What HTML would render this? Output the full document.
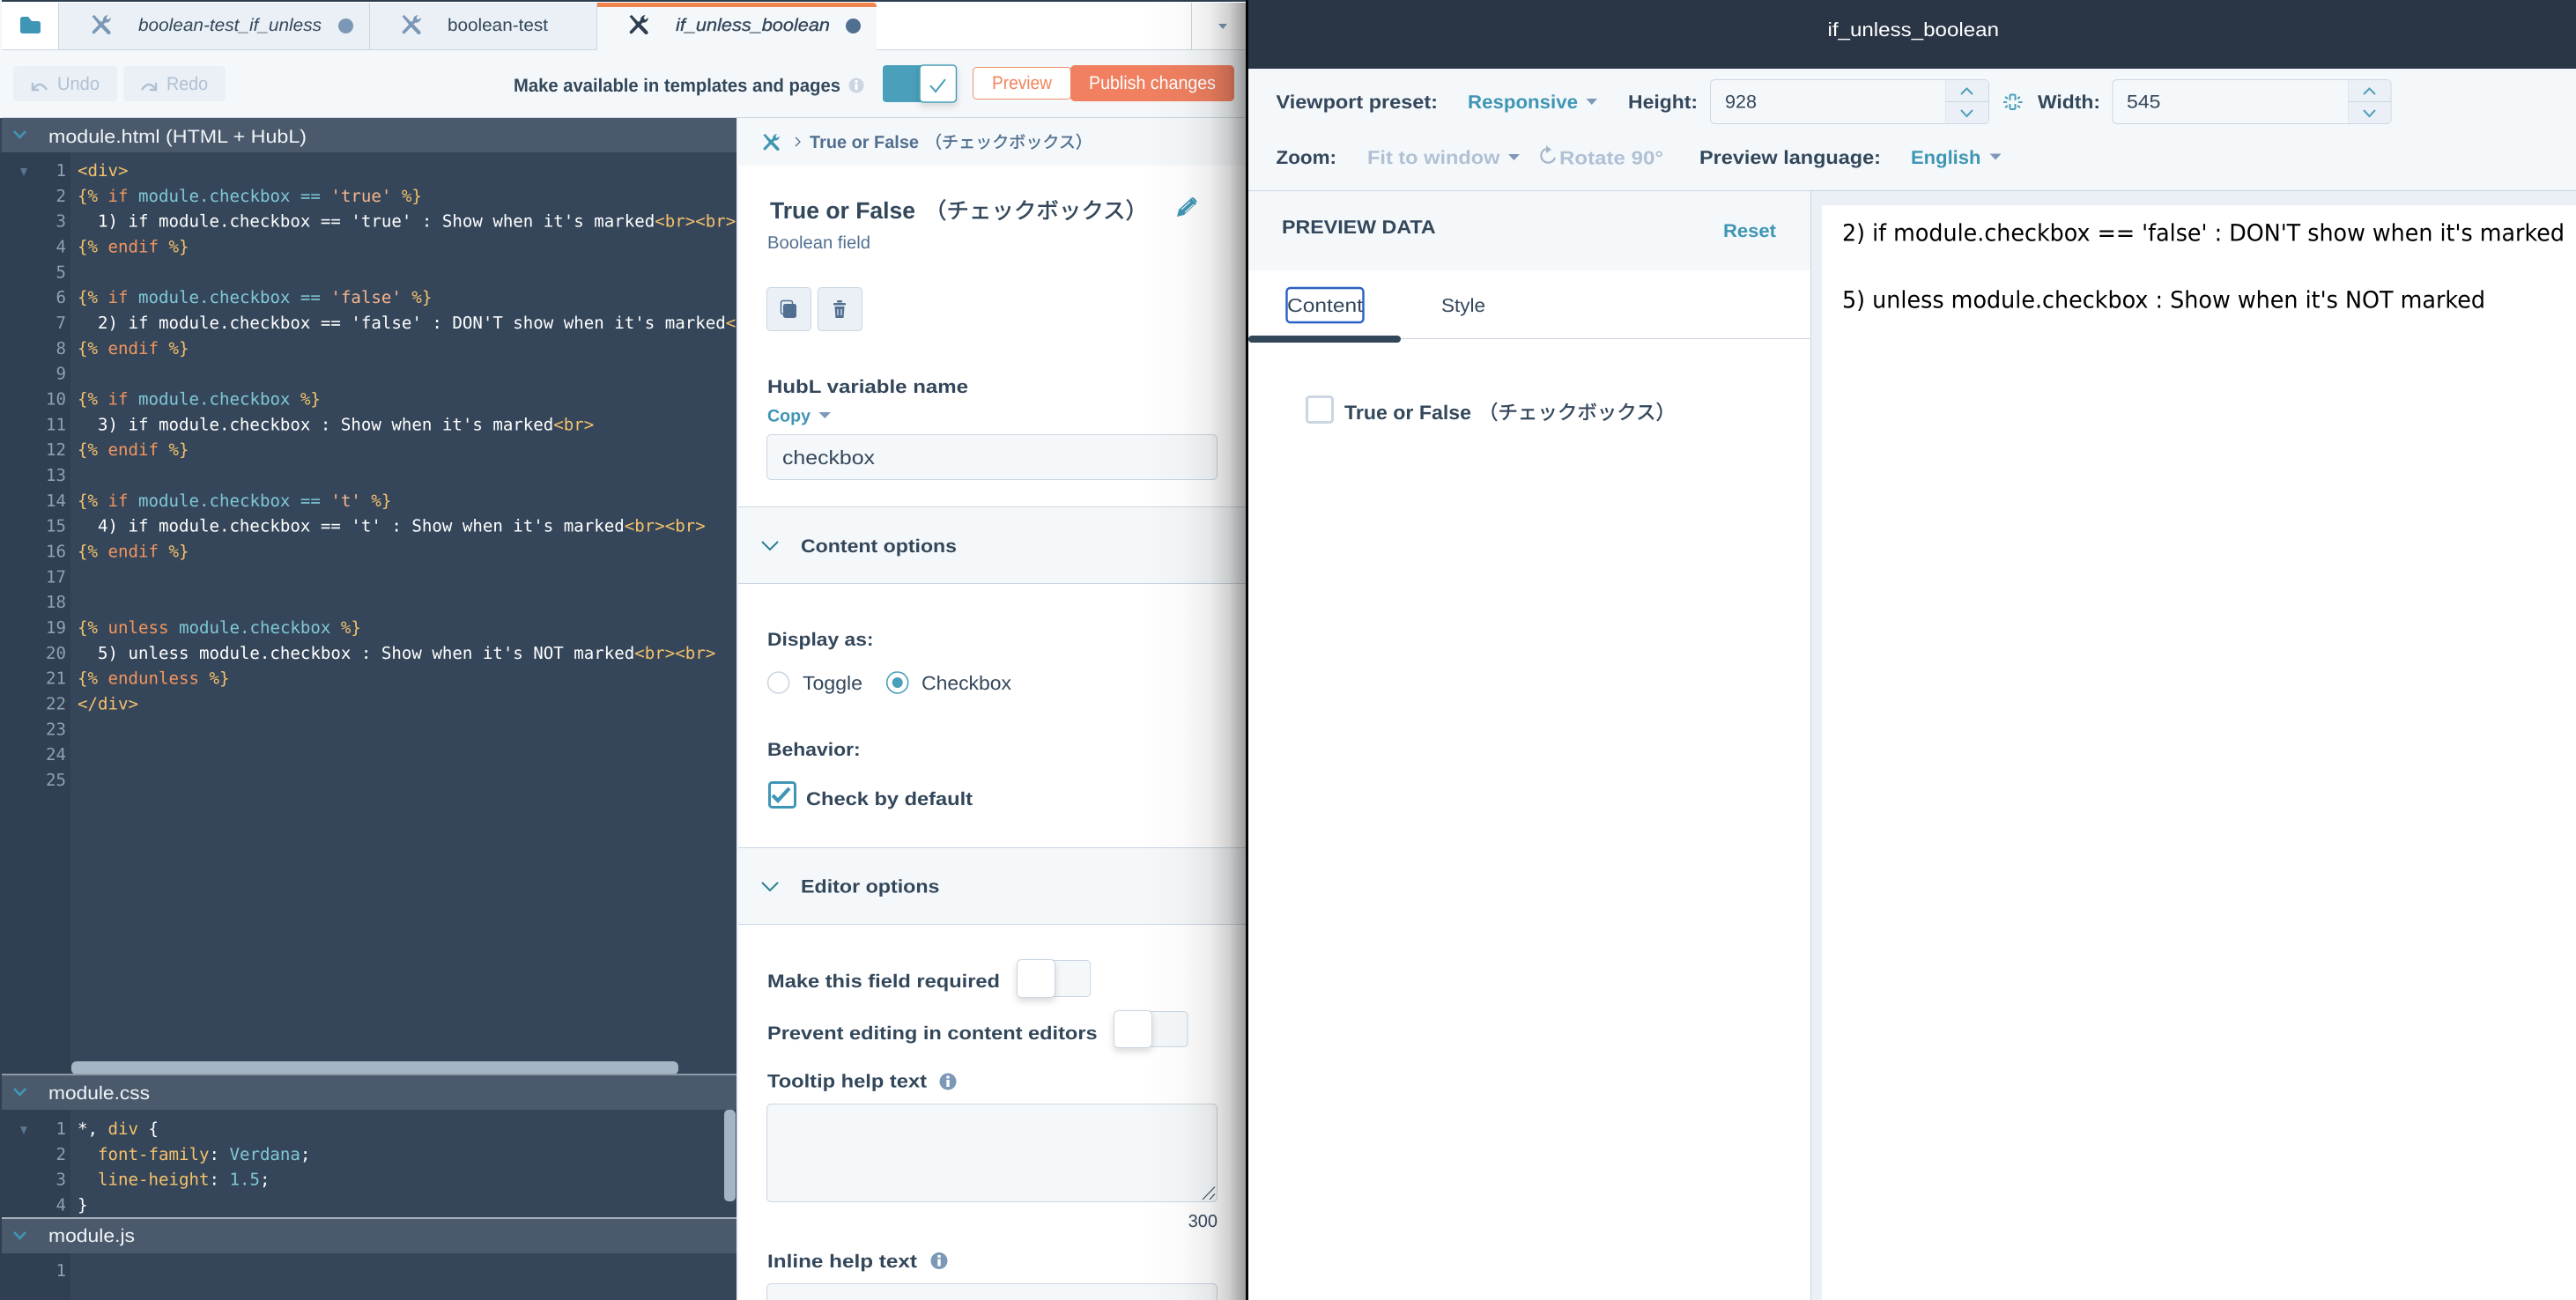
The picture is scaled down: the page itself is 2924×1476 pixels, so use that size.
<!DOCTYPE html>
<html lang="en">
<head>
<meta charset="utf-8">
<title>if_unless_boolean</title>
<style>
html,body{margin:0;padding:0;background:#fff;width:2924px;height:1476px;overflow:hidden}
svg{display:block}
text{white-space:pre;text-rendering:geometricPrecision}
.s{font-family:"Liberation Sans","Noto Sans CJK JP",sans-serif;fill:#33475b}
.b{font-weight:700}
.m{font-family:"DejaVu Sans Mono","Liberation Mono",monospace;font-size:19.1px;fill:#fff}
.v{font-family:"DejaVu Sans","Liberation Sans",sans-serif;fill:#000;font-size:26.5px}
.n{font-family:"DejaVu Sans Mono","Liberation Mono",monospace;font-size:19.1px;fill:#8fa0b3;text-anchor:end}
.y{fill:#f5c26b}.o{fill:#f2955f}.c{fill:#80c8d6}.p{fill:#f7b48c}
.t{fill:#3f96b4}
</style>
</head>
<body>
<svg xmlns="http://www.w3.org/2000/svg" width="2924" height="1476" viewBox="0 0 2924 1476">
<defs>
<symbol id="tools" viewBox="0 0 23 22">
<path d="M1.5 1.5 4 0 10.5 7 8 9.5Z" fill="currentColor"/>
<path d="M10 9 20.5 20" stroke="currentColor" stroke-width="4.2" stroke-linecap="round" fill="none"/>
<path d="M3.5 19.5 15.5 7" stroke="currentColor" stroke-width="3.6" stroke-linecap="round" fill="none"/>
<path d="M14 6.5C13.5 3 16 .5 19.5 0L17.5 3.5 19.5 5.5 22.8 3C22.8 7 19.5 9.5 16 8.5Z" fill="currentColor"/>
</symbol>
<linearGradient id="edge" x1="0" x2="1" y1="0" y2="0">
<stop offset="0" stop-color="#000" stop-opacity="0"/>
<stop offset=".4" stop-color="#000" stop-opacity=".02"/>
<stop offset=".65" stop-color="#000" stop-opacity=".07"/>
<stop offset=".83" stop-color="#000" stop-opacity=".18"/>
<stop offset="1" stop-color="#000" stop-opacity=".4"/>
</linearGradient>
<clipPath id="codeclip"><rect x="0" y="173" width="835" height="1050"/></clipPath>
<filter id="sh" x="-30%" y="-30%" width="160%" height="170%"><feDropShadow dx="0" dy="4" stdDeviation="4" flood-color="#000" flood-opacity=".14"/></filter>
</defs>

<!-- base -->
<rect width="2924" height="1476" fill="#fff"/>
<rect width="1417" height="3" fill="#2d3e50"/>
<rect x="0" y="0" width="2" height="134" fill="#f5f8fa"/>

<!-- tab bar -->
<rect x="2" y="2" width="1413" height="54" fill="#fff"/>
<rect x="67" y="3" width="611" height="53" fill="#eaf0f6"/>
<rect x="66" y="3" width="1" height="53" fill="#cbd6e2"/>
<rect x="419" y="3" width="1" height="53" fill="#cbd6e2"/>
<rect x="677" y="3" width="1" height="53" fill="#cbd6e2"/>
<rect x="2" y="56" width="676" height="1" fill="#cbd6e2"/>
<rect x="995" y="56" width="420" height="1" fill="#cbd6e2"/>
<rect x="1352" y="3" width="1" height="53" fill="#cbd6e2"/>
<path d="M1383 27h10l-5 6z" fill="#7c98b6"/>
<path d="M23 22q0-3 3-3h6l4 5h7q3 0 3 3v8q0 3-3 3H26q-3 0-3-3z" fill="#3f96b4"/>
<use href="#tools" x="103" y="17" width="23" height="22" style="color:#7c98b6"/>
<text class="s" x="157" y="35" font-size="20" font-style="italic" textLength="208" lengthAdjust="spacingAndGlyphs">boolean-test_if_unless</text>
<circle cx="392.5" cy="29.5" r="8.5" fill="#7c98b6"/>
<use href="#tools" x="455" y="17" width="23" height="22" style="color:#7c98b6"/>
<text class="s" x="508" y="35" font-size="20" textLength="114" lengthAdjust="spacingAndGlyphs">boolean-test</text>
<!-- active tab -->
<rect x="678" y="3" width="317" height="56" fill="#f5f8fa"/>
<path d="M678 8V3h313q4 0 4 5z" fill="#f2854e"/>
<use href="#tools" x="713" y="17" width="23" height="22" style="color:#2d3e50"/>
<text class="s" x="767" y="35" font-size="20" font-style="italic" textLength="175" lengthAdjust="spacingAndGlyphs" style="font-weight:400;stroke:#33475b;stroke-width:.35">if_unless_boolean</text>
<circle cx="968.5" cy="29.5" r="8.5" fill="#516f90"/>

<!-- toolbar -->
<rect x="2" y="57" width="676" height="76" fill="#f5f8fa"/>
<rect x="678" y="57" width="737" height="76" fill="#f5f8fa"/>
<rect x="2" y="133" width="1413" height="1" fill="#cbd6e2"/>
<rect x="15" y="75" width="118" height="40" rx="4" fill="#eaf0f6"/>
<rect x="140" y="75" width="116" height="40" rx="4" fill="#eaf0f6"/>
<path d="M37 94v8h7M37.5 101.500Q45 90 53 102" fill="none" stroke="#b0c1d4" stroke-width="2.4"/>
<path d="M177 94v8h-7M176.500 101.500Q169 90 161 102" fill="none" stroke="#b0c1d4" stroke-width="2.4"/>
<text class="s" x="65" y="102" font-size="21" textLength="48" lengthAdjust="spacingAndGlyphs" style="fill:#b0c1d4">Undo</text>
<text class="s" x="189" y="102" font-size="21" textLength="47" lengthAdjust="spacingAndGlyphs" style="fill:#b0c1d4">Redo</text>
<text class="s b" x="583" y="104" font-size="21" textLength="371" lengthAdjust="spacingAndGlyphs">Make available in templates and pages</text>
<circle cx="972" cy="97" r="8.500" fill="#cbd6e2"/>
<rect x="970.500" y="95" width="3" height="7" fill="#fff"/><rect x="970.500" y="91" width="3" height="3" fill="#fff"/>
<rect x="1002" y="74" width="60" height="42" rx="4" fill="#4a9fba"/>
<rect x="1044" y="74" width="41.500" height="42" rx="4" fill="#fff" stroke="#4a9fba" stroke-width="1.500" filter="url(#sh)"/>
<path d="M1056 98l6 7 11-14" transform="translate(0 -1)" fill="none" stroke="#4a9fba" stroke-width="2"/>
<rect x="1104.500" y="76.500" width="111" height="36" rx="4" fill="#fff" stroke="#f0906f"/>
<text class="s" x="1126" y="101" font-size="21" textLength="68" lengthAdjust="spacingAndGlyphs" style="fill:#f2845c">Preview</text>
<rect x="1215" y="74" width="186" height="41" rx="5" fill="#f08060"/>
<text class="s" x="1236" y="101" font-size="21" textLength="144" lengthAdjust="spacingAndGlyphs" style="fill:#fff">Publish changes</text>

<!-- code column -->
<rect x="0" y="134" width="836" height="1342" fill="#35465a"/>
<rect x="0" y="173" width="80" height="1303" fill="#303f51"/>
<rect x="2" y="134" width="834" height="39" fill="#4a5a6c"/>
<rect x="836" y="134" width="2" height="1342" fill="#eaf0f6"/>
<path d="M16 149l6.500 7 6.500-7" fill="none" stroke="#3f96b4" stroke-width="2.600"/>
<text class="s" x="55" y="162" font-size="21" textLength="293" lengthAdjust="spacingAndGlyphs" style="fill:#f0f3f6">module.html (HTML + HubL)</text>
<path d="M23 191h8l-4 9z" fill="#5c7590"/>

<g class="nums">
<text class="n" x="75" y="200">1</text><text class="n" x="75" y="228.800">2</text><text class="n" x="75" y="257.600">3</text><text class="n" x="75" y="286.500">4</text><text class="n" x="75" y="315.300">5</text><text class="n" x="75" y="344.100">6</text><text class="n" x="75" y="373">7</text><text class="n" x="75" y="401.800">8</text><text class="n" x="75" y="430.600">9</text><text class="n" x="75" y="459.500">10</text><text class="n" x="75" y="488.300">11</text><text class="n" x="75" y="517.100">12</text><text class="n" x="75" y="546">13</text><text class="n" x="75" y="574.800">14</text><text class="n" x="75" y="603.600">15</text><text class="n" x="75" y="632.500">16</text><text class="n" x="75" y="661.300">17</text><text class="n" x="75" y="690.100">18</text><text class="n" x="75" y="719">19</text><text class="n" x="75" y="747.800">20</text><text class="n" x="75" y="776.600">21</text><text class="n" x="75" y="805.500">22</text><text class="n" x="75" y="834.300">23</text><text class="n" x="75" y="863.100">24</text><text class="n" x="75" y="892">25</text>
</g>
<g clip-path="url(#codeclip)">
<text class="m y" x="88" y="200">&lt;div&gt;</text>
<text class="m" x="88" y="228.800"><tspan class="y">{%</tspan> <tspan class="o">if</tspan> <tspan class="c">module.checkbox == </tspan><tspan class="p">'true'</tspan> <tspan class="y">%}</tspan></text>
<text class="m" x="111" y="257.600">1) if module.checkbox == 'true' : Show when it's marked<tspan class="y">&lt;br&gt;&lt;br&gt;</tspan></text>
<text class="m" x="88" y="286.500"><tspan class="y">{%</tspan> <tspan class="o">endif</tspan> <tspan class="y">%}</tspan></text>
<text class="m" x="88" y="344.100"><tspan class="y">{%</tspan> <tspan class="o">if</tspan> <tspan class="c">module.checkbox == </tspan><tspan class="p">'false'</tspan> <tspan class="y">%}</tspan></text>
<text class="m" x="111" y="373">2) if module.checkbox == 'false' : DON'T show when it's marked<tspan class="y">&lt;br&gt;&lt;br&gt;</tspan></text>
<text class="m" x="88" y="401.800"><tspan class="y">{%</tspan> <tspan class="o">endif</tspan> <tspan class="y">%}</tspan></text>
<text class="m" x="88" y="459.500"><tspan class="y">{%</tspan> <tspan class="o">if</tspan> <tspan class="c">module.checkbox</tspan> <tspan class="y">%}</tspan></text>
<text class="m" x="111" y="488.300">3) if module.checkbox : Show when it's marked<tspan class="y">&lt;br&gt;</tspan></text>
<text class="m" x="88" y="517.100"><tspan class="y">{%</tspan> <tspan class="o">endif</tspan> <tspan class="y">%}</tspan></text>
<text class="m" x="88" y="574.800"><tspan class="y">{%</tspan> <tspan class="o">if</tspan> <tspan class="c">module.checkbox == </tspan><tspan class="p">'t'</tspan> <tspan class="y">%}</tspan></text>
<text class="m" x="111" y="603.600">4) if module.checkbox == 't' : Show when it's marked<tspan class="y">&lt;br&gt;&lt;br&gt;</tspan></text>
<text class="m" x="88" y="632.500"><tspan class="y">{%</tspan> <tspan class="o">endif</tspan> <tspan class="y">%}</tspan></text>
<text class="m" x="88" y="719"><tspan class="y">{%</tspan> <tspan class="o">unless</tspan> <tspan class="c">module.checkbox</tspan> <tspan class="y">%}</tspan></text>
<text class="m" x="111" y="747.800">5) unless module.checkbox : Show when it's NOT marked<tspan class="y">&lt;br&gt;&lt;br&gt;</tspan></text>
<text class="m" x="88" y="776.600"><tspan class="y">{%</tspan> <tspan class="o">endunless</tspan> <tspan class="y">%}</tspan></text>
<text class="m y" x="88" y="805.500">&lt;/div&gt;</text>
</g>
<rect x="81" y="1205" width="689" height="15" rx="6" fill="#a5b5c5"/>

<!-- module.css -->
<rect x="2" y="1219" width="834" height="2" fill="#8c99a8"/>
<rect x="2" y="1221" width="834" height="39" fill="#4a5a6c"/>
<path d="M16 1236l6.500 7 6.500-7" fill="none" stroke="#3f96b4" stroke-width="2.600"/>
<text class="s" x="55" y="1248" font-size="21" textLength="115" lengthAdjust="spacingAndGlyphs" style="fill:#f0f3f6">module.css</text>
<path d="M23 1279h8l-4 9z" fill="#5c7590"/>
<text class="n" x="75" y="1288">1</text><text class="n" x="75" y="1316.800">2</text><text class="n" x="75" y="1345.600">3</text><text class="n" x="75" y="1374.400">4</text>
<text class="m" x="88" y="1288">*, <tspan class="y">div</tspan> {</text>
<text class="m" x="111" y="1316.800"><tspan class="y">font-family</tspan>: <tspan class="c">Verdana</tspan>;</text>
<text class="m" x="111" y="1345.600"><tspan class="y">line-height</tspan>: <tspan class="c">1.5</tspan>;</text>
<text class="m" x="88" y="1374.400">}</text>
<rect x="822" y="1260" width="13" height="104" rx="5" fill="#a5b5c5"/>

<!-- module.js -->
<rect x="2" y="1382" width="834" height="2" fill="#a5b0bc"/>
<rect x="2" y="1384" width="834" height="39" fill="#4a5a6c"/>
<path d="M16 1399l6.500 7 6.500-7" fill="none" stroke="#3f96b4" stroke-width="2.600"/>
<text class="s" x="55" y="1410" font-size="21" textLength="98" lengthAdjust="spacingAndGlyphs" style="fill:#f0f3f6">module.js</text>
<text class="n" x="75" y="1449">1</text>

<!-- field panel -->
<rect x="838" y="134" width="577" height="1342" fill="#fff"/>
<rect x="838" y="134" width="577" height="54" fill="#f5f8fa"/>
<use href="#tools" x="865" y="152" width="20" height="19" style="color:#3f96b4"/>
<path d="M903 156l5 5-5 5" fill="none" stroke="#516f90" stroke-width="1.300"/>
<text class="s b" x="919" y="168" font-size="20" textLength="124" lengthAdjust="spacingAndGlyphs" style="fill:#516f90">True or False</text>
<text class="s" x="1050" y="168" font-size="19" textLength="190" lengthAdjust="spacingAndGlyphs" style="fill:#516f90;stroke:#516f90;stroke-width:.4">（チェックボックス）</text>
<text class="s b" x="874" y="248" font-size="26.500" textLength="165" lengthAdjust="spacingAndGlyphs">True or False</text>
<text class="s" x="1049" y="248" font-size="25.400" textLength="254" lengthAdjust="spacingAndGlyphs" style="stroke:#33475b;stroke-width:.5">（チェックボックス）</text>
<path d="M1336 246l2-8 14-13 6 6-14 13z" fill="#3f96b4"/>
<path d="M1341 238l10-9M1345 241l10-9" stroke="#fff" stroke-width="1"/>
<path d="M1352 224.500l2.500-.5 4 4-.5 2.500z" fill="#3f96b4"/>
<text class="s" x="871" y="282" font-size="20" textLength="117" lengthAdjust="spacingAndGlyphs" style="fill:#516f90">Boolean field</text>
<rect x="870.500" y="326.500" width="50" height="49" rx="4" fill="#eaf0f6" stroke="#cbd6e2"/>
<rect x="928.500" y="326.500" width="50" height="49" rx="4" fill="#eaf0f6" stroke="#cbd6e2"/>
<rect x="886.500" y="341.500" width="13" height="15" rx="2" fill="none" stroke="#516f90" stroke-width="1.500"/>
<rect x="889" y="345" width="15" height="16" rx="2.500" fill="#516f90"/>
<rect x="946" y="344" width="14" height="2.500" rx="1" fill="#516f90"/>
<rect x="950" y="341" width="6" height="2.500" rx="1" fill="#516f90"/>
<path d="M947.500 348h11l-1 13h-9z" fill="#516f90"/>
<path d="M951 351v7M955 351v7" stroke="#eaf0f6" stroke-width="1.200"/>

<text class="s b" x="871" y="446" font-size="21" textLength="228" lengthAdjust="spacingAndGlyphs">HubL variable name</text>
<text class="s b t" x="871" y="478.500" font-size="19.500" textLength="49" lengthAdjust="spacingAndGlyphs" style="fill:#3f96b4">Copy</text>
<path d="M929.500 468h13.500l-6.700 7z" fill="#7c98b6"/>
<rect x="870.500" y="493.500" width="511" height="51" rx="5" fill="#f5f8fa" stroke="#cbd6e2"/>
<text class="s" x="888" y="527" font-size="22" textLength="105" lengthAdjust="spacingAndGlyphs">checkbox</text>

<rect x="838" y="575" width="577" height="88" fill="#f5f8fa"/>
<rect x="838" y="575" width="577" height="1" fill="#cbd6e2"/>
<rect x="838" y="662" width="577" height="1" fill="#cbd6e2"/>
<path d="M865 615l9 9 9-9" fill="none" stroke="#2c7f8f" stroke-width="2"/>
<text class="s b" x="909" y="627" font-size="21" textLength="177" lengthAdjust="spacingAndGlyphs">Content options</text>

<text class="s b" x="871" y="733" font-size="21" textLength="120.500" lengthAdjust="spacingAndGlyphs">Display as:</text>
<circle cx="883.600" cy="775" r="12" fill="#fff" stroke="#cbd6e2" stroke-width="1.600"/>
<text class="s" x="911" y="783" font-size="22" textLength="68" lengthAdjust="spacingAndGlyphs">Toggle</text>
<circle cx="1018.700" cy="775" r="12" fill="#fff" stroke="#4a9fba" stroke-width="1.600"/>
<circle cx="1018.700" cy="775" r="6" fill="#4a9fba"/>
<text class="s" x="1046" y="783" font-size="22" textLength="102" lengthAdjust="spacingAndGlyphs">Checkbox</text>
<text class="s b" x="871" y="858" font-size="21" textLength="105.600" lengthAdjust="spacingAndGlyphs">Behavior:</text>
<rect x="873.500" y="888.500" width="29" height="28" rx="3" fill="#fff" stroke="#3f96b4" stroke-width="3"/>
<path d="M877 903l6 6 13-14" fill="none" stroke="#3f96b4" stroke-width="4.200"/>
<text class="s b" x="915" y="914" font-size="21" textLength="189" lengthAdjust="spacingAndGlyphs">Check by default</text>

<rect x="838" y="962" width="577" height="88" fill="#f5f8fa"/>
<rect x="838" y="962" width="577" height="1" fill="#cbd6e2"/>
<rect x="838" y="1049" width="577" height="1" fill="#cbd6e2"/>
<path d="M865 1002l9 9 9-9" fill="none" stroke="#2c7f8f" stroke-width="2"/>
<text class="s b" x="909" y="1013.500" font-size="21" textLength="157.500" lengthAdjust="spacingAndGlyphs">Editor options</text>

<text class="s b" x="871" y="1121" font-size="21" textLength="264" lengthAdjust="spacingAndGlyphs">Make this field required</text>
<rect x="1190.500" y="1090.500" width="47" height="41" rx="4" fill="#f5f8fa" stroke="#cbd6e2"/>
<rect x="1154.500" y="1089.500" width="43" height="43" rx="5" fill="#fff" stroke="#cbd6e2" filter="url(#sh)"/>
<text class="s b" x="871" y="1180" font-size="21" textLength="374.600" lengthAdjust="spacingAndGlyphs">Prevent editing in content editors</text>
<rect x="1301.500" y="1148.500" width="46.500" height="40" rx="4" fill="#f5f8fa" stroke="#cbd6e2"/>
<rect x="1264.500" y="1147.500" width="43" height="42" rx="5" fill="#fff" stroke="#cbd6e2" filter="url(#sh)"/>
<text class="s b" x="871" y="1234.700" font-size="21" textLength="181" lengthAdjust="spacingAndGlyphs">Tooltip help text</text>
<circle cx="1076" cy="1228" r="9.500" fill="#7c98b6"/>
<rect x="1074.300" y="1226" width="3.400" height="8" fill="#fff"/><rect x="1074.300" y="1221.500" width="3.400" height="3" fill="#fff"/>
<rect x="870.500" y="1253.500" width="511" height="111" rx="5" fill="#f5f8fa" stroke="#cbd6e2"/>
<path d="M1365 1362l14-14.500M1373 1362l6-6.500" stroke="#33475b" stroke-width="1.100"/>
<text class="s" x="1348.600" y="1393" font-size="20" textLength="33.400" lengthAdjust="spacingAndGlyphs">300</text>
<text class="s b" x="871" y="1439" font-size="21" textLength="170" lengthAdjust="spacingAndGlyphs">Inline help text</text>
<circle cx="1066" cy="1431.500" r="9.500" fill="#7c98b6"/>
<rect x="1064.300" y="1429.500" width="3.400" height="8" fill="#fff"/><rect x="1064.300" y="1425" width="3.400" height="3" fill="#fff"/>
<rect x="870.500" y="1457.500" width="511" height="40" rx="5" fill="#f5f8fa" stroke="#cbd6e2"/>

<!-- panel edge shadow -->
<rect x="1295" y="3" width="120" height="1473" fill="url(#edge)"/>
<rect x="1414" y="0" width="3" height="1476" fill="#050505"/>

<!-- preview header -->
<rect x="1417" y="0" width="1507" height="78" fill="#2a3646"/>
<text class="s" x="2074.500" y="41" font-size="22" textLength="194.500" lengthAdjust="spacingAndGlyphs" style="fill:#fff">if_unless_boolean</text>

<!-- preview toolbar -->
<rect x="1417" y="78" width="1507" height="138" fill="#f5f8fa"/>
<rect x="1417" y="216" width="1507" height="1" fill="#cbd6e2"/>
<text class="s b" x="1448.500" y="123" font-size="21.500" textLength="183.500" lengthAdjust="spacingAndGlyphs">Viewport preset:</text>
<text class="s b" x="1666" y="123" font-size="21.500" textLength="125" lengthAdjust="spacingAndGlyphs" style="fill:#3f96b4">Responsive</text>
<path d="M1800.500 112h12.500l-6.200 7z" fill="#7c98b6"/>
<text class="s b" x="1848" y="123" font-size="21.500" textLength="79" lengthAdjust="spacingAndGlyphs">Height:</text>
<rect x="1941.500" y="90.500" width="316" height="50" rx="5" fill="#f5f8fa" stroke="#cbd6e2"/>
<path d="M2208 91h45q4 0 4 4v41q0 4-4 4h-45z" fill="#eaf0f6"/>
<rect x="2208" y="91" width="1" height="48" fill="#dfe6ee"/>
<rect x="2208" y="115" width="49" height="1" fill="#cbd6e2"/>
<text class="s" x="1958" y="122.700" font-size="21" textLength="36" lengthAdjust="spacingAndGlyphs">928</text>
<path d="M2226 107l6.500-6.500 6.500 6.500M2226 125l6.500 7 6.500-7" fill="none" stroke="#4a9fba" stroke-width="2"/>
<g fill="none" stroke="#4a9fba" stroke-width="2">
<path d="M2281.500 114v-5q0-1.500 1.500-1.500h3q1.500 0 1.500 1.500v5M2281.500 118v4.500q0 1.500 1.500 1.500h3q1.500 0 1.500-1.500V118"/>
<path d="M2274 116h4M2291 116h4.500M2276 110l3 2M2293 110l-3 2M2276 122l3-2M2293 122l-3-2"/>
</g>
<text class="s b" x="2313" y="123" font-size="21.500" textLength="71" lengthAdjust="spacingAndGlyphs">Width:</text>
<rect x="2398" y="90.500" width="316" height="50" rx="5" fill="#f5f8fa" stroke="#cbd6e2"/>
<path d="M2665.400 91h44q4 0 4 4v41q0 4-4 4h-44z" fill="#eaf0f6"/>
<rect x="2665" y="91" width="1" height="48" fill="#dfe6ee"/>
<rect x="2665" y="115" width="48.500" height="1" fill="#cbd6e2"/>
<text class="s" x="2414" y="122.700" font-size="21" textLength="38.500" lengthAdjust="spacingAndGlyphs">545</text>
<path d="M2683 107l6.500-6.500 6.500 6.500M2683 125l6.500 7 6.500-7" fill="none" stroke="#4a9fba" stroke-width="2"/>

<text class="s b" x="1448.500" y="186" font-size="21.500" textLength="68.500" lengthAdjust="spacingAndGlyphs">Zoom:</text>
<text class="s b" x="1552" y="186" font-size="21.500" textLength="150.500" lengthAdjust="spacingAndGlyphs" style="fill:#b0c1d4">Fit to window</text>
<path d="M1712 175h13l-6.500 7z" fill="#7c98b6"/>
<path d="M1755 169a8 8 0 1 0 10 10" fill="none" stroke="#a5b5c8" stroke-width="2.200"/>
<path d="M1755 165l6 5-6 4z" fill="#a5b5c8"/>
<text class="s b" x="1770" y="186.500" font-size="21.500" textLength="118" lengthAdjust="spacingAndGlyphs" style="fill:#b0c1d4">Rotate 90°</text>
<text class="s b" x="1929" y="186" font-size="21.500" textLength="206" lengthAdjust="spacingAndGlyphs">Preview language:</text>
<text class="s b" x="2169" y="186" font-size="21.500" textLength="79.500" lengthAdjust="spacingAndGlyphs" style="fill:#3f96b4">English</text>
<path d="M2258.600 174.500h13l-6.500 7z" fill="#7c98b6"/>

<!-- preview data sidebar -->
<rect x="1417" y="217" width="638" height="90" fill="#f5f8fa"/>
<text class="s b" x="1455" y="265" font-size="21.500" textLength="174.600" lengthAdjust="spacingAndGlyphs">PREVIEW DATA</text>
<text class="s b" x="1956" y="269" font-size="21" textLength="60" lengthAdjust="spacingAndGlyphs" style="fill:#3f96b4">Reset</text>
<rect x="1460.500" y="327" width="87" height="39" rx="4" fill="#fff" stroke="#2a5fc4" stroke-width="2.400"/>
<text class="s" x="1461" y="354" font-size="21.500" textLength="86" lengthAdjust="spacingAndGlyphs">Content</text>
<text class="s" x="1636" y="354" font-size="21.500" textLength="50" lengthAdjust="spacingAndGlyphs">Style</text>
<rect x="1417" y="384" width="638" height="1" fill="#cbd6e2"/>
<rect x="1417" y="381" width="173" height="8" rx="4" fill="#33475b"/>
<rect x="1483.500" y="450.500" width="29" height="29" rx="3" fill="#fff" stroke="#cbd6e2" stroke-width="3"/>
<text class="s b" x="1526" y="476" font-size="22.500" textLength="144" lengthAdjust="spacingAndGlyphs">True or False</text>
<text class="s" x="1678" y="476" font-size="22.400" textLength="224" lengthAdjust="spacingAndGlyphs" style="stroke:#33475b;stroke-width:.45">（チェックボックス）</text>

<!-- preview frame -->
<rect x="2055" y="217" width="1" height="1259" fill="#cbd6e2"/>
<rect x="2056" y="217" width="868" height="16" fill="#eaf0f6"/>
<rect x="2056" y="217" width="12" height="1259" fill="#eaf0f6"/>
<text class="v" x="2091" y="273.500" textLength="820" lengthAdjust="spacingAndGlyphs">2) if module.checkbox == 'false' : DON'T show when it's marked</text>
<text class="v" x="2091" y="349.500" textLength="730" lengthAdjust="spacingAndGlyphs">5) unless module.checkbox : Show when it's NOT marked</text>
</svg>
</body>
</html>
